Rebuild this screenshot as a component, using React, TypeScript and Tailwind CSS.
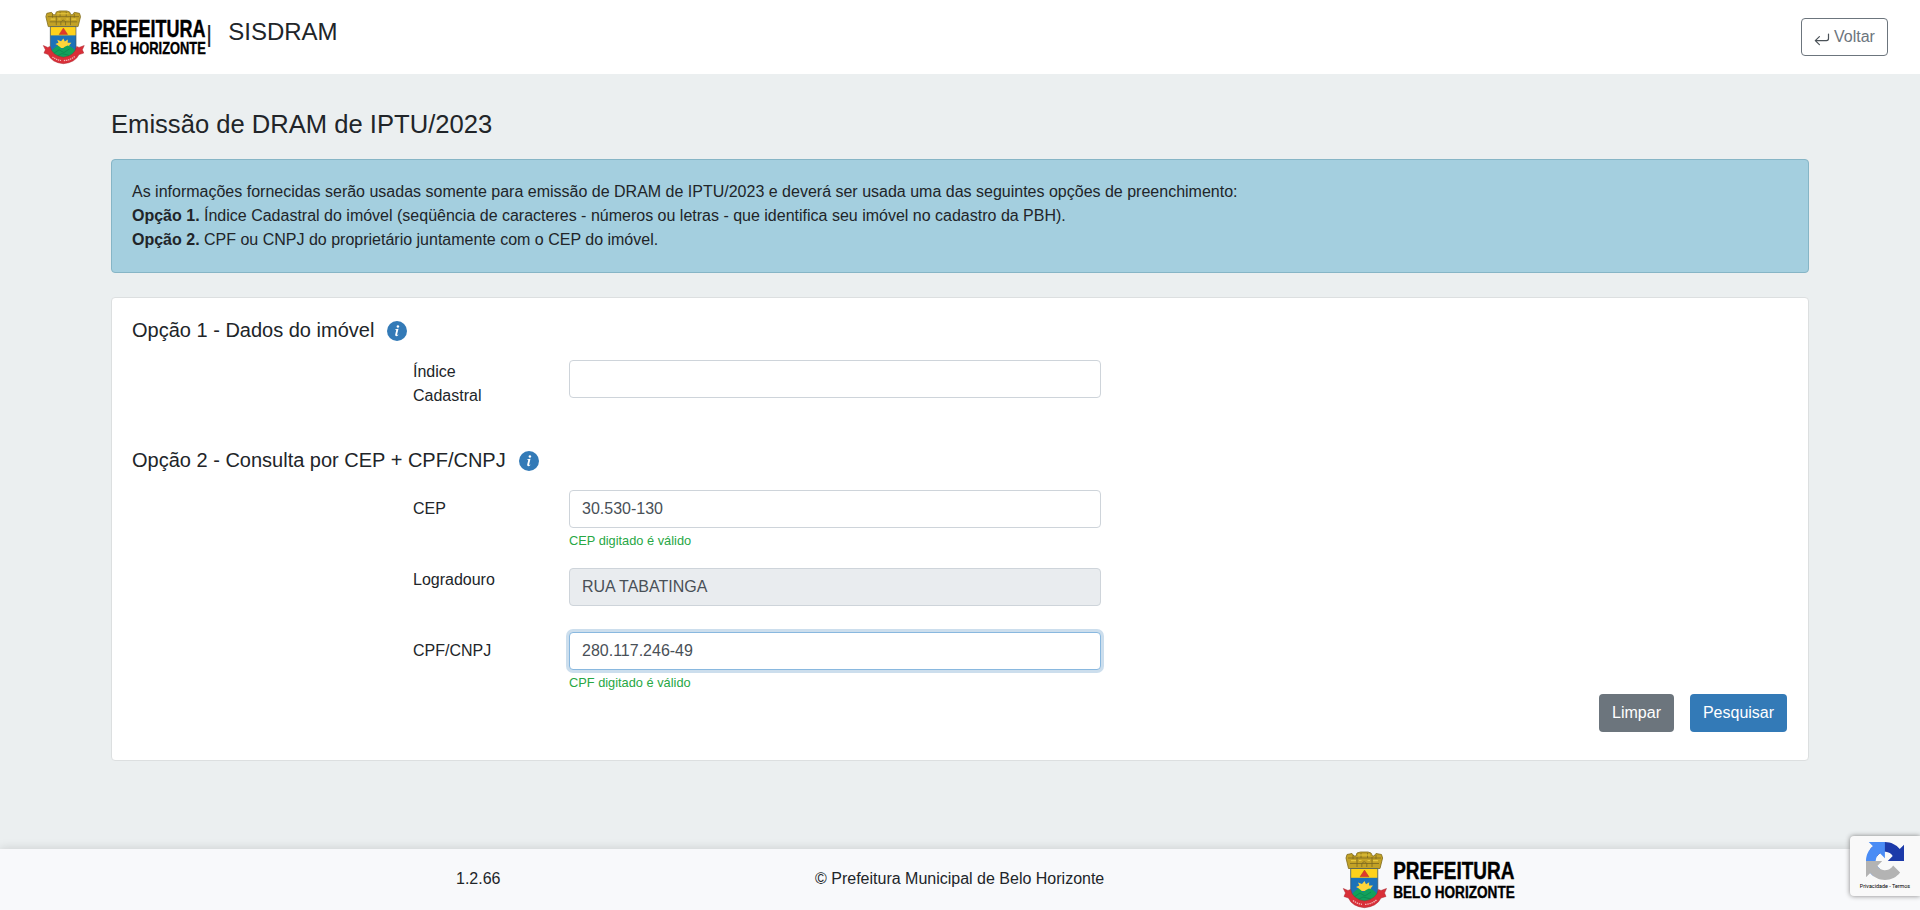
import React from "react";

function Logo({ className }: { className: string }) {
  return (
    <svg viewBox="0 0 172 57" className={`overflow-visible ${className}`} role="img" aria-label="Prefeitura Belo Horizonte">
      <path
        d="M5.5 17.5 L3 7 L4 3.5 L9 2.5 L11 5 L13 5 L14 2 L17.5 1 L25 1 L28 2 L29.5 5 L31 5 L33 2.5 L38.5 3.5 L39.6 7 L37 17.5 Z"
        fill="#c3a226"
        stroke="#7d6a1c"
        strokeWidth="0.8"
      />
      <path
        d="M5 7 H38 M7 12.5 H36 M10 4 V8 M14 6 V16 M18 2 V7 M24.5 2 V7 M29 6 V16 M33 4 V8 M18.8 16 V12.5 Q21.3 9 23.8 12.5 V16"
        fill="none"
        stroke="#7b6820"
        strokeWidth="0.8"
      />
      <path d="M15 4 H27 M8 9.7 H13 M30 9.7 H35 M16 9.5 H18.5 M24.5 9.5 H27" stroke="#e6c73f" strokeWidth="1.2" />
      <path d="M7.7 17.5 H34.8 V43 Q33.5 51 21.3 54.5 Q9 51 7.7 43 Z" fill="#1d72b8" />
      <path d="M7.7 17.5 H34.8 V26.8 H7.7 Z" fill="#ffd21c" />
      <path d="M21.5 19 L26 25.8 H17 Z" fill="#e2382c" stroke="#a03a1c" strokeWidth="0.4" />
      <path
        d="M21.5 30 L23 33.2 L26.2 31.2 L26 34.5 L30 34.6 L27.5 37.5 L29 40 L15 40 L16 37.5 L13 36 L16.3 34.5 L15 31.5 L19 33 Z"
        fill="#ffd53a"
      />
      <path d="M8 44.5 Q12 39 16 37.8 Q18 39 20 41.2 Q23 38.5 26 37.5 Q31 38.5 34.5 43.5 L33.5 48 L21.3 54 L9 48 Z" fill="#12a15c" />
      <path d="M11 46 L17 42 L22 45 L28 41 M14 49 L20 46 L28 48" fill="none" stroke="#0c7c49" strokeWidth="0.6" />
      <path
        d="M7.7 17.5 H34.8 V43 Q33.5 51 21.3 54.5 Q9 51 7.7 43 Z"
        fill="none"
        stroke="#41525c"
        strokeWidth="0.7"
      />
      <path
        d="M0.3 37.5 L5 39.5 L7.5 38.5 Q9.5 48.5 21.5 50 Q33.5 48.5 35.5 38.5 L38 39.5 L43.5 37.5 L41.5 42 L43 45.5 L38 47 Q34 55.5 21.5 56.7 Q9 55.5 5.5 47 L1 45.5 L2.5 42 Z"
        fill="#d92f38"
        stroke="#a8242c"
        strokeWidth="0.5"
      />
      <path
        d="M10 49.5 Q14 52.7 19 53.3 M22 53.4 Q29 53 33.5 49"
        fill="none"
        stroke="#f3b9bb"
        strokeWidth="1.3"
        strokeDasharray="1.4 0.8"
      />
      <g
        fill="#000"
        stroke="#000"
        strokeWidth="0.4"
        fontWeight="bold"
        fontFamily='"Liberation Sans Narrow", "Liberation Sans", Arial, sans-serif'
      >
        <text x="50.2" y="28" fontSize="24.6" textLength="121.3" lengthAdjust="spacingAndGlyphs">
          PREFEITURA
        </text>
        <text x="50.2" y="46.8" fontSize="17.4" textLength="121.6" lengthAdjust="spacingAndGlyphs">
          BELO HORIZONTE
        </text>
      </g>
    </svg>
  );
}

function InfoIcon() {
  return (
    <svg viewBox="0 0 20 20" className="mt-0.5 size-5">
      <circle cx="10" cy="10" r="10" fill="#337ab7" />
      <circle cx="10.9" cy="5.4" r="1.25" fill="#fff" />
      <path
        d="M8.3 8.3 L11.5 7.8 L10.1 13.6 Q10 14.4 11.4 13.6 L11.2 14.3 Q9.9 15.3 8.9 15.1 Q7.9 14.8 8.2 13.5 L9.2 9.3 Q9.3 8.8 8.2 8.8 Z"
        fill="#fff"
      />
    </svg>
  );
}

function ReturnIcon() {
  return (
    <svg viewBox="0 0 16 14" className="h-[14px] w-4" fill="none" stroke="#4b5258" strokeWidth="1.2" strokeLinecap="round" strokeLinejoin="round">
      <path d="M14.5 2 V6.6 Q14.5 8.6 12.5 8.6 H1.3 M5.4 4.6 L1.3 8.6 L5.4 12.6" />
    </svg>
  );
}

function RecaptchaIcon() {
  return (
    <svg viewBox="0 0 64 64" className="size-[38px]">
      <path
        d="M64 31.955l-.018-1.37V4.687l-7.16 7.16C50.962 4.674 42.033.093 32.03.093c-10.4 0-19.633 4.96-25.458 12.64l11.736 11.86a15.55 15.55 0 0 1 4.754-5.334c2.05-1.6 4.952-2.906 8.968-2.906.485 0 .86.057 1.135.163 4.976.393 9.288 3.14 11.828 7.124l-8.307 8.307L64 31.953"
        fill="#1c3aa9"
      />
      <path
        d="M31.862.094l-1.37.018H4.594l7.16 7.16C4.58 13.147 0 22.06 0 32.062c0 10.4 4.96 19.633 12.64 25.458L24.5 45.784a15.55 15.55 0 0 1-5.334-4.754c-1.6-2.05-2.906-4.952-2.906-8.968 0-.485.057-.86.163-1.135.393-4.976 3.14-9.288 7.124-11.828l8.307 8.307L31.86.095"
        fill="#4a8cf5"
      />
      <path
        d="M.001 32.045l.018 1.37v25.898l7.16-7.16c5.873 7.173 14.774 11.754 24.776 11.754 10.4 0 19.633-4.96 25.458-12.64l-11.736-11.86a15.55 15.55 0 0 1-4.754 5.334c-2.05 1.6-4.952 2.906-8.968 2.906-.485 0-.86-.057-1.135-.163-4.976-.393-9.288-3.14-11.828-7.124l8.307-8.307L0 32.047"
        fill="#b3b3b3"
      />
    </svg>
  );
}

function OptionHeading({ children }: { children: React.ReactNode }) {
  return (
    <div className="flex h-6 items-center gap-[13px]">
      <h2 className="text-xl leading-6">{children}</h2>
      <InfoIcon />
    </div>
  );
}

interface FieldProps {
  label: string;
  value?: string;
  message?: string;
  labelClass: string;
  inputClass: string;
  readOnly?: boolean;
}

function Field({ label, value = "", message, labelClass, inputClass, readOnly }: FieldProps) {
  return (
    <div className="ml-[281px] flex">
      <label className={`w-[156px] shrink-0 pr-[60px] leading-6 ${labelClass}`}>{label}</label>
      <div className="w-[532px]">
        <input
          className={`block h-[38px] w-full rounded border px-3 text-[#495057] outline-none ${inputClass}`}
          defaultValue={value}
          readOnly={readOnly}
        />
        {message && <p className="mt-[3px] text-[12.8px] leading-[19px] text-[#28a745]">{message}</p>}
      </div>
    </div>
  );
}

export default function App() {
  return (
    <div className="relative flex h-[910px] flex-col overflow-hidden bg-[#ebeff0] font-['Liberation_Sans',Arial,sans-serif] text-base text-[#212529]">
      <header className="flex h-[74px] shrink-0 justify-between bg-white pr-8 pl-[43px]">
        <div className="flex pt-[10px]">
          <Logo className="h-[54px] w-[163px]" />
          <span className="pt-[6px] text-2xl leading-9">|</span>
          <h1 className="ml-4 pt-1 text-2xl leading-9">SISDRAM</h1>
        </div>
        <button className="mt-[18px] flex h-[38px] w-[87px] items-center justify-center gap-1 rounded border border-[#6c757d] text-[#6c757d]">
          <span className="mt-[3px]">
            <ReturnIcon />
          </span>
          <span>Voltar</span>
        </button>
      </header>

      <main className="grow px-[111px] pt-[35px]">
        <h2 className="text-[25.6px] leading-[31px]">Emissão de DRAM de IPTU/2023</h2>

        <section className="mt-[19px] h-[114px] rounded border border-[#86b5c6] bg-[#a4cfdf] px-5 pt-5 leading-6">
          <p>
            As informações fornecidas serão usadas somente para emissão de DRAM de IPTU/2023 e deverá ser usada uma das
            seguintes opções de preenchimento:
          </p>
          <p>
            <b>Opção 1.</b> Índice Cadastral do imóvel (seqüência de caracteres - números ou letras - que identifica seu
            imóvel no cadastro da PBH).
          </p>
          <p>
            <b>Opção 2.</b> CPF ou CNPJ do proprietário juntamente com o CEP do imóvel.
          </p>
        </section>

        <section className="mt-6 h-[464px] rounded border border-[#dcdfe0] bg-white px-5 pt-5">
          <OptionHeading>Opção 1 - Dados do imóvel</OptionHeading>
          <div className="mt-[18px] h-[88px]">
            <Field label="Índice Cadastral" labelClass="" inputClass="border-[#ced4da] bg-white" />
          </div>

          <OptionHeading>Opção 2 - Consulta por CEP + CPF/CNPJ</OptionHeading>
          <div className="mt-[18px] flex flex-col">
            <div className="h-[78px]">
              <Field
                label="CEP"
                value="30.530-130"
                message="CEP digitado é válido"
                labelClass="pt-[7px]"
                inputClass="border-[#ced4da] bg-white"
              />
            </div>
            <div className="h-16">
              <Field
                label="Logradouro"
                value="RUA TABATINGA"
                labelClass=""
                inputClass="border-[#ced4da] bg-[#e9ecef]"
                readOnly
              />
            </div>
            <div className="h-[62px]">
              <Field
                label="CPF/CNPJ"
                value="280.117.246-49"
                message="CPF digitado é válido"
                labelClass="pt-[7px]"
                inputClass="border-[#89b8df] bg-white shadow-[0_0_0_3px_rgba(51,122,183,0.25)]"
              />
            </div>
          </div>
          <div className="flex justify-end gap-4 pr-px">
            <button className="h-[38px] w-[75px] rounded bg-[#6c757d] text-white">Limpar</button>
            <button className="h-[38px] w-[97px] rounded bg-[#337ab7] text-white">Pesquisar</button>
          </div>
        </section>
      </main>

      <footer className="flex h-[61px] shrink-0 bg-[#f8f9fb] pl-[456px] shadow-[0_0_10px_rgba(0,0,0,0.15)]">
        <span className="w-[359px] pt-[18px] leading-6">1.2.66</span>
        <span className="w-[528px] pt-[18px] leading-6">© Prefeitura Municipal de Belo Horizonte</span>
        <Logo className="mt-[2px] h-[57px] w-[172px]" />
      </footer>

      <aside className="absolute right-0 bottom-[14px] flex h-[60px] w-[70px] flex-col items-center rounded-l-sm bg-[#f9f9f9] pt-[6px] shadow-[0_0_5px_gray]">
        <RecaptchaIcon />
        <span className="mt-px font-['Roboto','Liberation_Sans',sans-serif] text-[5.4px] leading-[10px] whitespace-nowrap text-black">
          Privacidade - Termos
        </span>
      </aside>
    </div>
  );
}
